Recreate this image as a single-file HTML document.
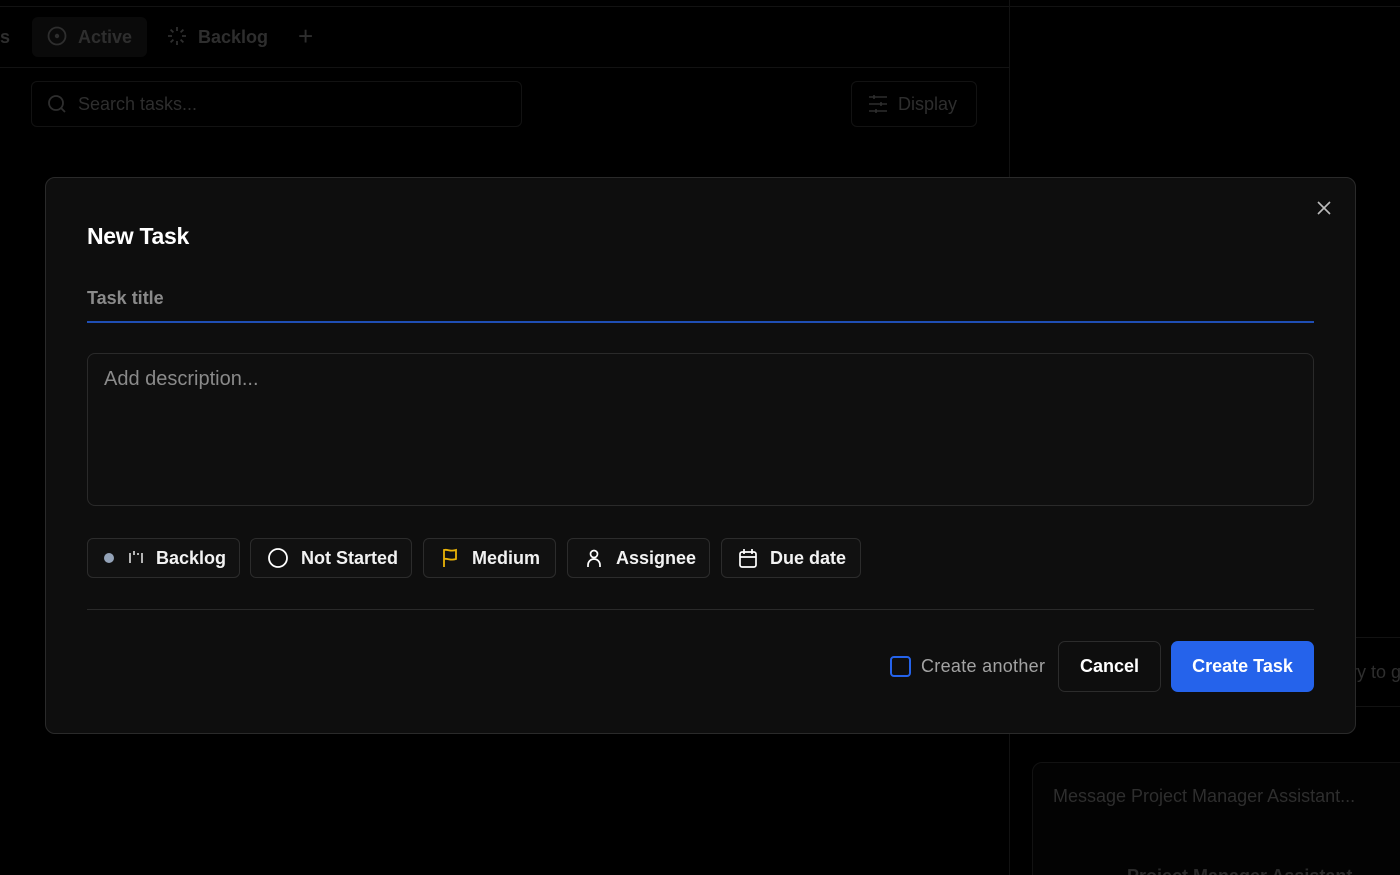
<!DOCTYPE html>
<html><head><meta charset="utf-8"><style>
*{box-sizing:border-box;margin:0;padding:0}
html,body{width:1400px;height:875px;overflow:hidden}
body{background:#000;font-family:"Liberation Sans",sans-serif;position:relative;color:#fff}
.a{position:absolute;white-space:nowrap}
.dim{color:#2e2e2e}
.chip{position:absolute;top:538px;height:40px;border:1px solid #2c2c2c;border-radius:6px;background:#111;display:flex;align-items:center;font-size:18px;font-weight:bold;color:#f2f2f2}
.chip svg{margin-right:12px}
</style></head><body>
<div class="a" style="left:0;top:6px;width:1400px;height:1px;background:#121212"></div>
<div class="a" style="left:1009px;top:0;width:1px;height:875px;background:#121212"></div>
<div class="a" style="left:0;top:67px;width:1009px;height:1px;background:#121212"></div>
<div class="a dim" style="left:0;top:27px;font-size:18px;font-weight:bold">s</div>
<div class="a" style="left:32px;top:17px;width:115px;height:40px;background:#0a0a0a;border-radius:6px"></div>
<svg class="a" style="left:47px;top:26px" width="20" height="20" viewBox="0 0 20 20" fill="none" stroke="#2e2e2e" stroke-width="1.8"><circle cx="10" cy="10" r="8.5"/><circle cx="10" cy="10" r="1.3" fill="#2e2e2e"/></svg>
<div class="a dim" style="left:78px;top:27px;font-size:18px;font-weight:bold">Active</div>
<svg class="a" style="left:167px;top:26px" width="20" height="20" viewBox="0 0 20 20" stroke="#2e2e2e" stroke-width="1.8"><path d="M10 1v4M10 15v4M1 10h4M15 10h4M3.6 3.6l2.8 2.8M13.6 13.6l2.8 2.8M3.6 16.4l2.8-2.8M13.6 6.4l2.8-2.8"/></svg>
<div class="a dim" style="left:198px;top:27px;font-size:18px;font-weight:bold">Backlog</div>
<div class="a dim" style="left:298px;top:21px;font-size:26px">+</div>
<div class="a" style="left:31px;top:81px;width:491px;height:46px;border:1px solid #121212;border-radius:6px"></div>
<svg class="a" style="left:47px;top:94px" width="20" height="20" viewBox="0 0 20 20" fill="none" stroke="#2e2e2e" stroke-width="1.8"><circle cx="9" cy="9" r="7"/><path d="M14 14l4 4"/></svg>
<div class="a dim" style="left:78px;top:94px;font-size:18px">Search tasks...</div>
<div class="a" style="left:851px;top:81px;width:126px;height:46px;border:1px solid #121212;border-radius:6px"></div>
<svg class="a" style="left:868px;top:94px" width="20" height="20" viewBox="0 0 20 20" stroke="#2e2e2e" stroke-width="1.6"><path d="M1 3h18M1 10h18M1 17h18M6 1v4M13 8v4M8 15v4"/></svg>
<div class="a dim" style="left:898px;top:94px;font-size:18px">Display</div>
<div class="a" style="left:1350px;top:637px;width:60px;height:70px;border:1px solid #121212;border-radius:6px;overflow:hidden"><div class="a dim" style="left:0;top:24px;font-size:18px">ry to g</div></div>
<div class="a" style="left:1032px;top:762px;width:400px;height:140px;border:1px solid #121212;border-radius:10px;background:#030303"></div>
<div class="a" style="left:1053px;top:786px;font-size:18px;color:#2e2e2e">Message Project Manager Assistant...</div>
<div class="a" style="left:1127px;top:866px;font-size:18px;font-weight:bold;color:#2a2a2a">Project Manager Assistant</div>
<!-- modal -->
<div class="a" style="left:45px;top:177px;width:1311px;height:557px;background:#0e0e0e;border:1px solid #2a2a2a;border-radius:10px"></div>
<svg class="a" style="left:1317px;top:201px" width="14" height="14" viewBox="0 0 14 14" stroke="#bbb" stroke-width="1.6"><path d="M1 1l12 12M13 1L1 13"/></svg>
<div class="a" style="left:87px;top:223px;font-size:23px;font-weight:bold;color:#fff;letter-spacing:-0.3px">New Task</div>
<div class="a" style="left:87px;top:288px;font-size:18px;font-weight:bold;color:#8a8a8a">Task title</div>
<div class="a" style="left:87px;top:321px;width:1227px;height:2px;background:#2563eb;transform:scaleY(0.75)"></div>
<div class="a" style="left:87px;top:353px;width:1227px;height:153px;border:1px solid #2a2a2a;border-radius:8px;background:#0f0f0f"></div>
<div class="a" style="left:104px;top:368px;font-size:20px;color:#8a8a8a">Add description...</div>
<div class="chip" style="left:87px;width:153px;padding-left:16px"><span style="width:10px;height:10px;border-radius:50%;background:#94a3b8;margin-right:14px"></span><svg width="16" height="16" viewBox="0 0 16 16" stroke="#ddd" stroke-width="1.6"><path d="M2 3v10M6 1v4M10 3v2M14 3v10"/></svg>Backlog</div>
<div class="chip" style="left:250px;width:162px;padding-left:16px"><svg width="22" height="22" viewBox="0 0 22 22" fill="none" stroke="#fff" stroke-width="1.8"><circle cx="11" cy="11" r="9"/></svg>Not Started</div>
<div class="chip" style="left:423px;width:133px;padding-left:16px"><svg width="20" height="20" viewBox="0 0 20 20" fill="none" stroke="#eab308" stroke-width="1.8"><path d="M4 19V2c4-1 6 2 12 0v9c-6 2-8-1-12 0"/></svg>Medium</div>
<div class="chip" style="left:567px;width:143px;padding-left:16px"><svg width="20" height="20" viewBox="0 0 20 20" fill="none" stroke="#fff" stroke-width="1.7"><circle cx="10" cy="6" r="3.5"/><path d="M4 19v-2a6 6 0 0112 0v2"/></svg>Assignee</div>
<div class="chip" style="left:721px;width:140px;padding-left:16px"><svg width="20" height="20" viewBox="0 0 20 20" fill="none" stroke="#fff" stroke-width="1.7"><rect x="2" y="4" width="16" height="15" rx="2"/><path d="M2 9h16M6 1v5M14 1v5"/></svg>Due date</div>
<div class="a" style="left:87px;top:609px;width:1227px;height:1px;background:#2a2a2a"></div>
<div class="a" style="left:890px;top:656px;width:21px;height:21px;border:2px solid #2563eb;border-radius:4px"></div>
<div class="a" style="left:921px;top:656px;font-size:18px;color:#a3a3a3;letter-spacing:0.3px">Create another</div>
<div class="a" style="left:1058px;top:641px;width:103px;height:51px;border:1px solid #2c2c2c;border-radius:7px;background:#0e0e0e;font-size:18px;font-weight:bold;display:flex;align-items:center;justify-content:center">Cancel</div>
<div class="a" style="left:1171px;top:641px;width:143px;height:51px;border-radius:7px;background:#2563eb;font-size:18px;font-weight:bold;display:flex;align-items:center;justify-content:center">Create Task</div>
</body></html>
